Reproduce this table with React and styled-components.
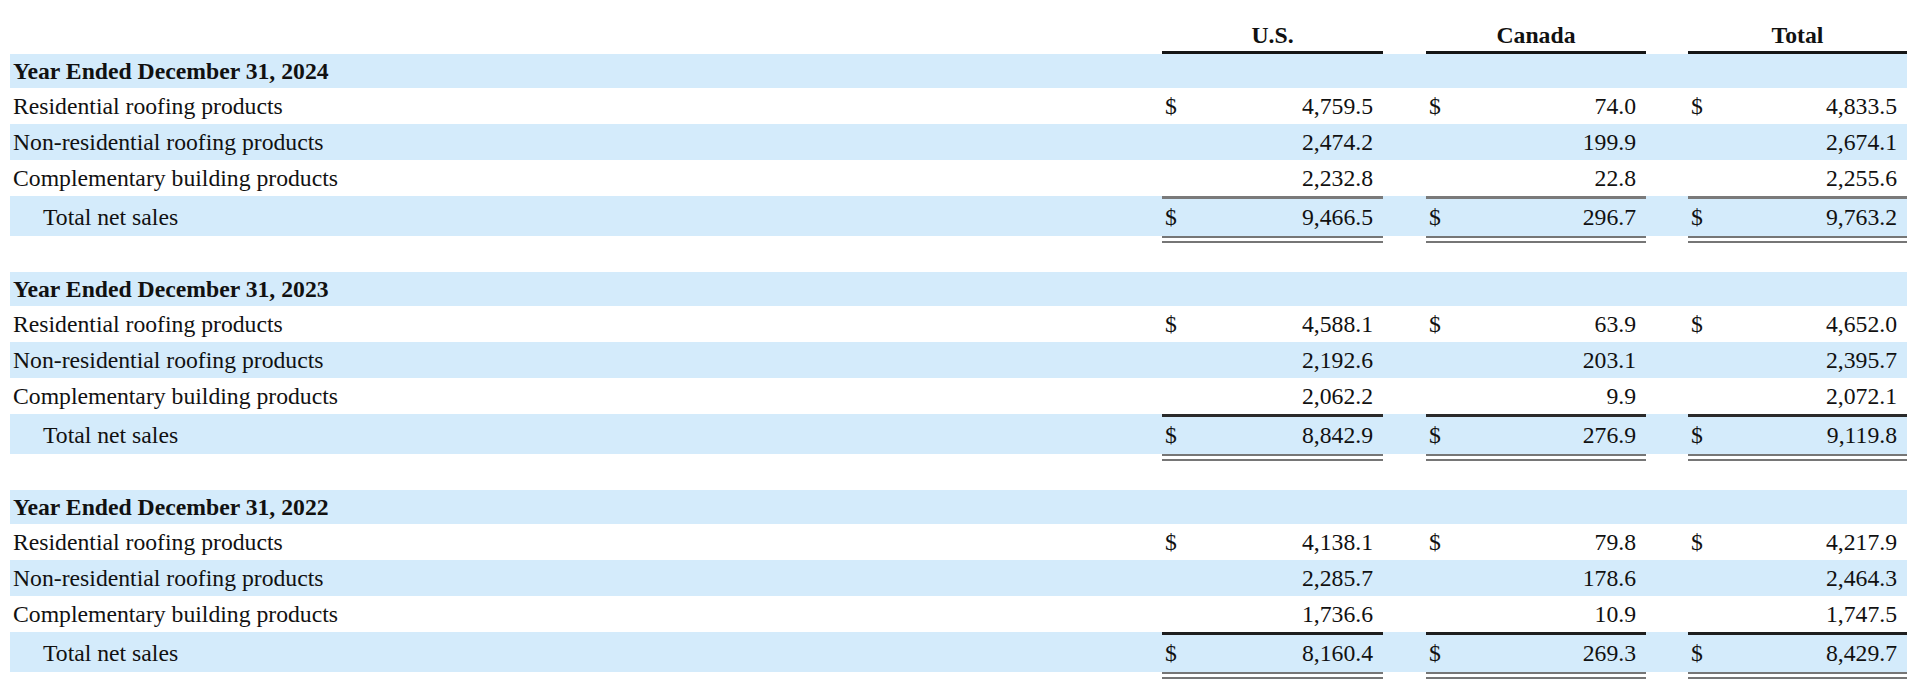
import React from 'react';
import styled, { createGlobalStyle } from 'styled-components';

const COLUMNS = '1152px 221px 43px 220px 42px 219px';
const BAND = '#d4ebfb';

const GlobalStyle = createGlobalStyle`
  body {
    margin: 0;
    background: #ffffff;
    color: #111111;
    font-family: "Liberation Serif", "Times New Roman", serif;
    font-size: 23.7px;
    line-height: 27px;
  }
`;

const Page = styled.div`
  padding-left: 10px;
  width: 1897px;
`;

const HeadRow = styled.div`
  display: grid;
  grid-template-columns: ${COLUMNS};
  height: 54px;
  align-items: end;
`;

const HeadCell = styled.div`
  grid-column: ${(p) => p.$col};
  text-align: center;
  font-weight: bold;
  padding-bottom: 2px;
  border-bottom: 3px solid #151515;
`;

const Section = styled.section`
  margin-bottom: 29px;
`;

const Row = styled.div`
  display: grid;
  grid-template-columns: ${COLUMNS};
  align-items: center;
  height: ${(p) => p.$height}px;
  background: ${(p) => (p.$band ? BAND : 'transparent')};
`;

const Label = styled.div`
  grid-column: 1;
  padding-left: ${(p) => p.$indent}px;
  padding-top: ${(p) => p.$drop || 0}px;
  font-weight: ${(p) => (p.$bold ? 'bold' : 'normal')};
  white-space: nowrap;
`;

const Amount = styled.div`
  grid-column: ${(p) => p.$col};
  display: flex;
  justify-content: space-between;
  align-items: center;
  align-self: stretch;
  padding: 0 10px 0 3px;
  border-top: ${(p) => (p.$rule ? `3px solid ${p.$rule}` : 'none')};
`;

const UnderlineRow = styled.div`
  display: grid;
  grid-template-columns: ${COLUMNS};
  height: 7px;
`;

const DoubleRule = styled.div`
  grid-column: ${(p) => p.$col};
  border-top: 7px double #767676;
`;

const sections = [
  {
    year: '2024',
    rule: '#7a7a7a',
    rows: [
      ['Residential roofing products', '4,759.5', '74.0', '4,833.5'],
      ['Non-residential roofing products', '2,474.2', '199.9', '2,674.1'],
      ['Complementary building products', '2,232.8', '22.8', '2,255.6'],
    ],
    total: ['9,466.5', '296.7', '9,763.2'],
  },
  {
    year: '2023',
    rule: '#2a2a2a',
    rows: [
      ['Residential roofing products', '4,588.1', '63.9', '4,652.0'],
      ['Non-residential roofing products', '2,192.6', '203.1', '2,395.7'],
      ['Complementary building products', '2,062.2', '9.9', '2,072.1'],
    ],
    total: ['8,842.9', '276.9', '9,119.8'],
  },
  {
    year: '2022',
    rule: '#1e1e1e',
    rows: [
      ['Residential roofing products', '4,138.1', '79.8', '4,217.9'],
      ['Non-residential roofing products', '2,285.7', '178.6', '2,464.3'],
      ['Complementary building products', '1,736.6', '10.9', '1,747.5'],
    ],
    total: ['8,160.4', '269.3', '8,429.7'],
  },
];

const amountCols = [2, 4, 6];

const YearSection = ({ year, rule, rows, total }) => (
  <Section>
    <Row $height={34} $band>
      <Label $indent={3} $bold>Year Ended December 31, {year}</Label>
    </Row>
    {rows.map(([label, ...values], i) => (
      <Row key={label} $height={36} $band={i % 2 === 1}>
        <Label $indent={3}>{label}</Label>
        {values.map((v, j) => (
          <Amount key={j} $col={amountCols[j]}>
            <span>{i === 0 ? '$' : ''}</span>
            <span>{v}</span>
          </Amount>
        ))}
      </Row>
    ))}
    <Row $height={40} $band>
      <Label $indent={33} $drop={3}>Total net sales</Label>
      {total.map((v, j) => (
        <Amount key={j} $col={amountCols[j]} $rule={rule}>
          <span>$</span>
          <span>{v}</span>
        </Amount>
      ))}
    </Row>
    <UnderlineRow>
      {amountCols.map((c) => (
        <DoubleRule key={c} $col={c} />
      ))}
    </UnderlineRow>
  </Section>
);

const App = () => (
  <>
    <GlobalStyle />
    <Page>
      <HeadRow>
        <HeadCell $col={2}>U.S.</HeadCell>
        <HeadCell $col={4}>Canada</HeadCell>
        <HeadCell $col={6}>Total</HeadCell>
      </HeadRow>
      {sections.map((s) => (
        <YearSection key={s.year} {...s} />
      ))}
    </Page>
  </>
);

export default App;
